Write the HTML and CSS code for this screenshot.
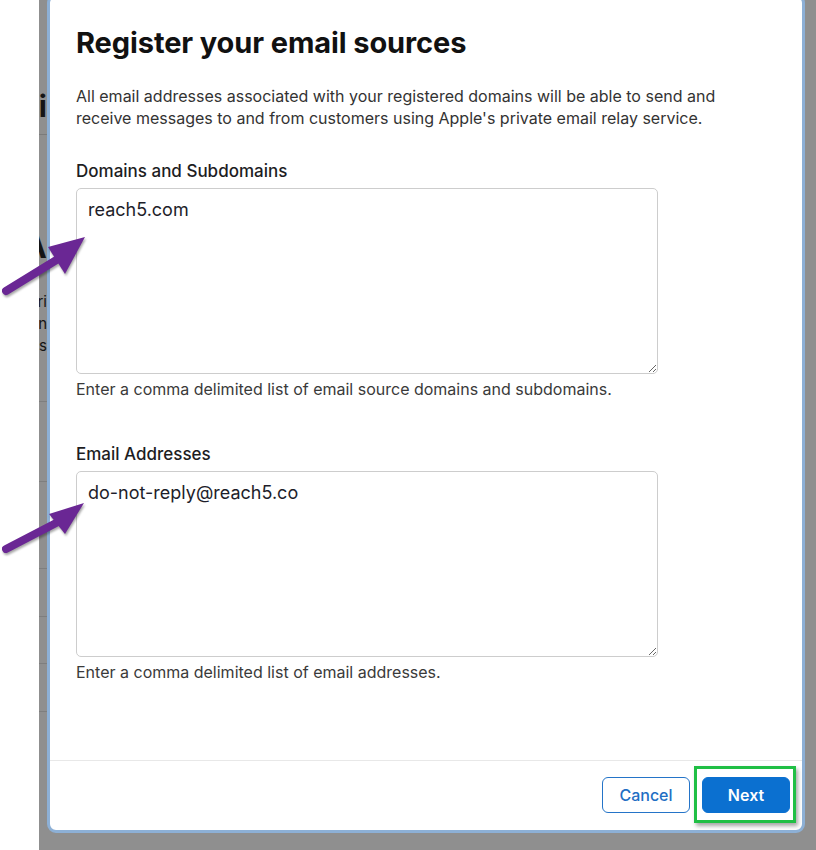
FILE: index.html
```html
<!DOCTYPE html>
<html lang="en">
<head>
    <meta charset="UTF-8">
    <meta name="viewport" content="width=device-width, initial-scale=1.0">
    <title>Register your email sources</title>
    <link rel="stylesheet" href="styles.css">
</head>
<body>
    <div class="screen">
        <div class="gutter"></div>
        <div class="backdrop">
            <!-- the page under the dialog, only its left edge shows -->
            <div class="under">
                <div class="u-title">ri</div>
                <div class="u-head">A</div>
                <div class="u-text">ri</div>
                <div class="u-text">on</div>
                <div class="u-text">ds</div>
                <div class="u-row first"></div>
                <div class="u-row r80"></div>
                <div class="u-row r87"></div>
                <div class="u-row r48"></div>
                <div class="u-row r47"></div>
                <div class="u-row r48"></div>
            </div>
        </div>

        <div class="modal">
            <div class="modal-body">
                <h1 class="title">Register your email sources</h1>
                <p class="desc">All email addresses associated with your registered domains will be able to send and receive messages to and from customers using Apple's private email relay service.</p>

                <div class="form-group">
                    <label class="label" for="domains">Domains and Subdomains</label>
                    <textarea class="field" id="domains">reach5.com</textarea>
                    <div class="help">Enter a comma delimited list of email source domains and subdomains.</div>
                </div>

                <div class="form-group second">
                    <label class="label" for="emails">Email Addresses</label>
                    <textarea class="field" id="emails">do-not-reply@reach5.co</textarea>
                    <div class="help">Enter a comma delimited list of email addresses.</div>
                </div>
            </div>
            <div class="modal-footer">
                <button class="btn btn-cancel">Cancel</button>
                <button class="btn btn-next">Next</button>
            </div>
        </div>

        <!-- annotation layer -->
        <div class="highlight"></div>
        <svg class="arrows" width="816" height="850" viewBox="0 0 816 850">
            <line x1="6" y1="291" x2="58" y2="259" stroke="#6a2794" stroke-width="8" stroke-linecap="round"/>
            <polygon points="85,237 48,247 65,274" fill="#6a2794"/>
            <line x1="6" y1="549" x2="58" y2="522" stroke="#6a2794" stroke-width="8" stroke-linecap="round"/>
            <polygon points="84,503 49,514 65,534" fill="#6a2794"/>
        </svg>
    </div>
</body>
</html>
```

FILE: styles.css
```css
*{
    margin: 0;
    padding: 0;
    box-sizing: border-box;
}
body{
    background-color: #fff;
    font-family: Inter, "Noto Sans", sans-serif;
    width: 816px;
    height: 850px;
    overflow: hidden;
}
.screen{
    position: relative;
    display: flex;
    width: 816px;
    height: 850px;
}
.gutter{
    width: 39px;
    background-color: #fff;
}
.backdrop{
    flex: 1;
    background-color: #8f8f8f;
}
.under{
    display: flex;
    flex-direction: column;
    width: 8px;
    overflow: hidden;
    direction: rtl;
    color: #151515;
    white-space: nowrap;
}
.u-title{
    margin-top: 86px;
    height: 49px;
    font-size: 30px;
    font-weight: 700;
    line-height: 40px;
    border-bottom: 1px solid #7b7b7b;
}
.u-head{
    margin-top: 92px;
    font-size: 32px;
    font-weight: 700;
    line-height: 40px;
}
.u-text{
    font-size: 15px;
    line-height: 22px;
}
.u-head + .u-text{
    margin-top: 24px;
}
.u-row{
    border-bottom: 1px solid #7e7e7e;
}
.u-row.first{
    margin-top: 44px;
    height: 0;
    border-bottom: 0;
    border-top: 1px solid #7e7e7e;
}
.r80{ height: 80px; }
.r87{ height: 87px; }
.r48{ height: 48px; }
.r47{ height: 47px; }

.modal{
    position: absolute;
    left: 47px;
    top: -6px;
    width: 758px;
    height: 839px;
    display: flex;
    flex-direction: column;
    background-color: #fff;
    border: 3px solid #8db0d6;
    border-radius: 9px;
}
.modal-body{
    flex: 1;
    padding: 28px 26px 0 26px;
}
.title{
    font-size: 29px;
    font-weight: 700;
    line-height: 36px;
    color: #111;
    letter-spacing: -0.1px;
}
.desc{
    margin-top: 24px;
    font-size: 16px;
    line-height: 22px;
    color: #333;
    width: 680px;
}
.form-group{
    margin-top: 31px;
}
.form-group.second{
    margin-top: 43px;
}
.label{
    display: block;
    font-size: 17px;
    font-weight: 500;
    line-height: 22px;
    color: #1d1d1f;
    margin-bottom: 6px;
}
.field{
    display: block;
    width: 582px;
    height: 186px;
    padding: 9px 11px;
    border: 1px solid #cdcdcd;
    border-radius: 5px;
    font-family: Inter, "Noto Sans", sans-serif;
    font-size: 18px;
    line-height: 24px;
    color: #1e1e2a;
    outline: none;
}
.help{
    margin-top: 4px;
    font-size: 16px;
    line-height: 22px;
    color: #3a3a3a;
}
.modal-footer{
    display: flex;
    justify-content: flex-end;
    gap: 12px;
    height: 70px;
    padding: 16px 12px 0 0;
    border-top: 1px solid #e8e8e8;
}
.btn{
    width: 88px;
    height: 36px;
    border-radius: 6px;
    font-family: Inter, "Noto Sans", sans-serif;
    font-size: 16px;
    font-weight: 500;
}
.btn-cancel{
    background-color: #fff;
    border: 1px solid #2474c8;
    color: #1f6fc4;
}
.btn-next{
    background-color: #0b70d0;
    border: 1px solid #0b70d0;
    color: #fff;
    font-weight: 600;
}
.highlight{
    position: absolute;
    left: 694px;
    top: 766px;
    width: 102px;
    height: 57px;
    border: 3px solid #20bf45;
    box-shadow: 2px 3px 4px rgba(0,0,0,.35);
}
.arrows{
    position: absolute;
    left: 0;
    top: 0;
    pointer-events: none;
    filter: drop-shadow(1px 2px 1px rgba(0,0,0,.35));
}
```
